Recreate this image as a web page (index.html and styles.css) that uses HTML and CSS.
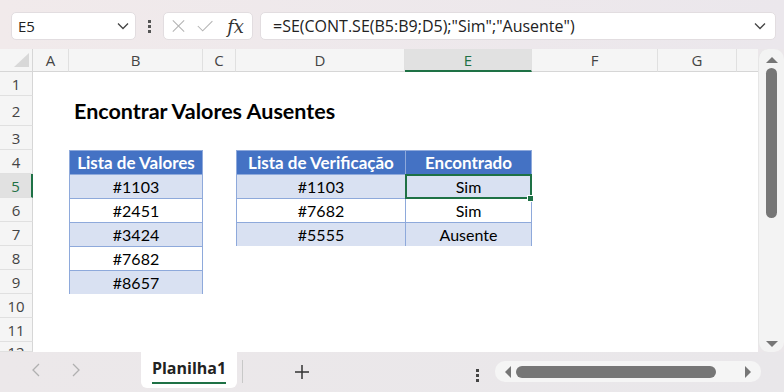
FILE: index.html
```html
<!DOCTYPE html>
<html lang="pt">
<head>
    <meta charset="UTF-8">
    <title>Encontrar Valores Ausentes</title>
    <link rel="stylesheet" href="styles.css">
</head>
<body>
    <div class="app">
        <!-- Formula bar -->
        <div class="topbar">
            <div class="namebox">
                <span>E5</span>
                <svg class="chev" width="12" height="8" viewBox="0 0 12 8"><path d="M1 1.5 L6 6.5 L11 1.5" fill="none" stroke="#444" stroke-width="1.3"/></svg>
            </div>
            <div class="vdots"><i></i><i></i><i></i></div>
            <div class="fxbox">
                <svg width="16" height="16" viewBox="0 0 16 16"><path d="M1 1 L15 15 M15 1 L1 15" stroke="#b4b4b4" stroke-width="1.3"/></svg>
                <svg width="20" height="16" viewBox="0 0 20 16"><path d="M1 8 L7 14 L19 2" fill="none" stroke="#b4b4b4" stroke-width="1.3"/></svg>
                <span class="fx">fx</span>
            </div>
            <div class="formula">
                <span>=SE(CONT.SE(B5:B9;D5);"Sim";"Ausente")</span>
                <svg class="chev" width="12" height="8" viewBox="0 0 12 8"><path d="M1 1.5 L6 6.5 L11 1.5" fill="none" stroke="#444" stroke-width="1.3"/></svg>
            </div>
        </div>

        <div class="main">
            <div class="sheet">
                <div class="corner"><span class="tri"></span></div>
                <div class="colh">A</div>
                <div class="colh">B</div>
                <div class="colh">C</div>
                <div class="colh">D</div>
                <div class="colh sel">E</div>
                <div class="colh">F</div>
                <div class="colh">G</div>
                <div class="colh last"></div>

                <div class="rowh r1">1</div>
                <div class="rowh r2">2</div>
                <div class="rowh r3">3</div>
                <div class="rowh r4">4</div>
                <div class="rowh r5 sel">5</div>
                <div class="rowh r6">6</div>
                <div class="rowh r7">7</div>
                <div class="rowh r8">8</div>
                <div class="rowh r9">9</div>
                <div class="rowh r10">10</div>
                <div class="rowh r11">11</div>
                <div class="rowh r12">12</div>

                <div class="title">Encontrar Valores Ausentes</div>

                <div class="xtable t1">
                    <div class="th">Lista de Valores</div>
                    <div class="td band">#1103</div>
                    <div class="td">#2451</div>
                    <div class="td band">#3424</div>
                    <div class="td">#7682</div>
                    <div class="td band">#8657</div>
                </div>

                <div class="xtable t2">
                    <div class="th">Lista de Verificação</div>
                    <div class="th">Encontrado</div>
                    <div class="td band">#1103</div>
                    <div class="td band active">Sim<span class="handle"></span></div>
                    <div class="td">#7682</div>
                    <div class="td">Sim</div>
                    <div class="td band">#5555</div>
                    <div class="td band">Ausente</div>
                </div>
            </div>

            <div class="vscroll">
                <span class="arrow up"></span>
                <span class="thumb"></span>
                <span class="arrow down"></span>
            </div>
        </div>

        <!-- Sheet tabs -->
        <div class="bottombar">
            <div class="nav">
                <svg width="10" height="16" viewBox="0 0 10 16"><path d="M8 2 L2 8 L8 14" fill="none" stroke="#b0b0b0" stroke-width="1.3"/></svg>
                <svg width="10" height="16" viewBox="0 0 10 16"><path d="M2 2 L8 8 L2 14" fill="none" stroke="#b0b0b0" stroke-width="1.3"/></svg>
            </div>
            <div class="tab"><span>Planilha1</span></div>
            <div class="sep"></div>
            <div class="plus">
                <svg width="16" height="16" viewBox="0 0 16 16"><path d="M8 1 V15 M1 8 H15" stroke="#333" stroke-width="1.5"/></svg>
            </div>
            <div class="hdots"><i></i><i></i><i></i></div>
            <div class="hscroll">
                <span class="arrow left"></span>
                <span class="thumb"></span>
                <span class="arrow right"></span>
            </div>
        </div>
    </div>
</body>
</html>
```

FILE: styles.css
```css
/* === Base === */
body {
    margin: 0;
    background: #ebe7ea;
    font-family: "Open Sans", "Noto Sans", sans-serif;
    color: #222;
}

.app {
    width: 784px;
    height: 392px;
    display: flex;
    flex-direction: column;
    overflow: hidden;
}

/* === Formula bar === */
.topbar {
    height: 49px;
    box-sizing: border-box;
    padding: 12px 8px 0 11px;
    display: flex;
    align-items: flex-start;
    background: linear-gradient(to right, #f1eaeb, #ebe7ec);
}

.namebox,
.fxbox,
.formula {
    height: 28px;
    box-sizing: border-box;
    background: #fff;
    border: 1px solid #e2dde0;
    border-radius: 5px;
    display: flex;
    align-items: center;
}

.namebox {
    width: 125px;
    padding: 0 6px 0 6px;
    justify-content: space-between;
    font-size: 15px;
}

.vdots {
    width: 27px;
    height: 28px;
    display: flex;
    flex-direction: column;
    align-items: center;
    justify-content: center;
    gap: 2px;
}

.vdots i {
    width: 3px;
    height: 3px;
    background: #555;
}

.fxbox {
    width: 90px;
    padding: 0 8px 0 8px;
    gap: 12px;
}

.fx {
    font-family: "DejaVu Serif", "Liberation Serif", serif;
    font-style: italic;
    font-size: 18px;
    color: #333;
    margin-left: 2px;
}

.formula {
    flex: 1;
    margin-left: 7px;
    padding: 0 9px 0 12px;
    justify-content: space-between;
    font-size: 16px;
}

/* === Grid === */
.main {
    display: flex;
    height: 303px;
}

.sheet {
    width: 758px;
    background: #fff;
    display: grid;
    grid-template-columns: 33px 36px 134px 33px 169px 127px 126px 79px 21px;
    grid-template-rows: 23px 24px 30px repeat(9, 24px) 10px;
    font-family: "Lato", "Open Sans", sans-serif;
    font-size: 16px;
    position: relative;
}

.corner {
    grid-row: 1;
    grid-column: 1;
    background: #f5f5f5;
    border-right: 1px solid #d6d6d6;
    border-bottom: 1px solid #d6d6d6;
    position: relative;
}

.tri {
    position: absolute;
    right: 3px;
    bottom: 4px;
    width: 0;
    height: 0;
    border-left: 15px solid transparent;
    border-bottom: 14px solid #d8d8d8;
}

.colh {
    grid-row: 1;
    background: #f5f5f5;
    border-right: 1px solid #e0e0e0;
    border-bottom: 1px solid #d6d6d6;
    display: flex;
    align-items: center;
    justify-content: center;
    font-family: "Open Sans", sans-serif;
    font-size: 15px;
    color: #444;
}

.colh.last {
    border-right: none;
}

.colh.sel {
    background: #e1e1e1;
    color: #1e7145;
    border-bottom: 2px solid #1e7145;
}

.rowh {
    grid-column: 1;
    background: #f5f5f5;
    border-right: 1px solid #d6d6d6;
    border-bottom: 1px solid #e0e0e0;
    display: flex;
    align-items: center;
    justify-content: center;
    font-family: "Open Sans", sans-serif;
    font-size: 15px;
    color: #444;
}

.rowh.sel {
    background: #e1e1e1;
    color: #1e7145;
    border-right: 2px solid #1e7145;
}

.r1 { grid-row: 2; }
.r2 { grid-row: 3; }
.r3 { grid-row: 4; }
.r4 { grid-row: 5; }
.r5 { grid-row: 6; }
.r6 { grid-row: 7; }
.r7 { grid-row: 8; }
.r8 { grid-row: 9; }
.r9 { grid-row: 10; }
.r10 { grid-row: 11; }
.r11 { grid-row: 12; }
.r12 { grid-row: 13; align-items: flex-start; overflow: hidden; }

.title {
    grid-row: 3;
    grid-column: 3 / 8;
    padding-left: 5px;
    display: flex;
    align-items: center;
    font-weight: bold;
    font-size: 21.5px;
    color: #000;
}

/* === Tables === */
.xtable {
    display: grid;
    grid-auto-rows: 24px;
    border-right: 1px solid #8ea9db;
    border-bottom: 1px solid #8ea9db;
    box-sizing: border-box;
}

.t1 {
    grid-column: 3;
    grid-row: 5 / 11;
    grid-template-columns: 1fr;
}

.t2 {
    grid-column: 5 / 7;
    grid-row: 5 / 9;
    grid-template-columns: 169px 1fr;
}

.th,
.td {
    border-left: 1px solid #8ea9db;
    border-top: 1px solid #8ea9db;
    display: flex;
    align-items: center;
    justify-content: center;
    color: #000;
}

.th {
    background: #4472c4;
    color: #fff;
    font-weight: bold;
    font-size: 17px;
}

.td.band {
    background: #d9e1f2;
}

.td.active {
    position: relative;
}

/* selection box over E5 */
.td.active::after {
    content: '';
    position: absolute;
    left: -1px;
    top: -1px;
    right: -1px;
    bottom: -1px;
    border: 2px solid #1e7145;
}

.handle {
    position: absolute;
    right: -3px;
    bottom: -4px;
    width: 5px;
    height: 5px;
    background: #1e7145;
    border: 1px solid #fff;
    z-index: 2;
}

/* === Vertical scrollbar === */
.vscroll {
    flex: 1;
    background: #f3f3f3;
    border-left: 1px solid #e6e6e6;
    border-radius: 10px 10px 10px 10px;
    display: flex;
    flex-direction: column;
    align-items: center;
    padding-top: 5px;
}

.vscroll .thumb {
    width: 11px;
    height: 150px;
    margin-top: 5px;
    background: #767676;
    border-radius: 6px;
}

.arrow {
    width: 0;
    height: 0;
}

.arrow.up {
    border-left: 6px solid transparent;
    border-right: 6px solid transparent;
    border-bottom: 6px solid #767676;
    margin-top: 3px;
}

.arrow.down {
    margin-top: auto;
    margin-bottom: 5px;
    border-left: 6px solid transparent;
    border-right: 6px solid transparent;
    border-top: 6px solid #767676;
}

/* === Bottom bar === */
.bottombar {
    flex: 1;
    display: flex;
    align-items: flex-start;
    background: linear-gradient(to right, #ece8ea, #e9e7ea);
}

.nav {
    width: 141px;
    height: 36px;
    display: flex;
    align-items: center;
    gap: 30px;
    padding-left: 31px;
    box-sizing: border-box;
}

.tab {
    width: 96px;
    height: 36px;
    background: #fff;
    border-radius: 0 0 6px 6px;
    display: flex;
    justify-content: center;
    align-items: flex-start;
}

.tab span {
    font-family: "Open Sans", sans-serif;
    font-weight: bold;
    font-size: 16px;
    color: #222;
    margin-top: 5px;
    padding-bottom: 2px;
    border-bottom: 2px solid #1e7145;
    height: 23px;
    line-height: 23px;
}

.sep {
    width: 1px;
    height: 23px;
    margin: 8px 0 0 5px;
    background: #c8c8c8;
}

.plus {
    margin: 12px 0 0 51px;
    display: flex;
}

.hdots {
    margin: 17px 0 0 166px;
    display: flex;
    flex-direction: column;
    gap: 2px;
}

.hdots i {
    width: 3px;
    height: 3px;
    background: #444;
}

.hscroll {
    margin: 9px 0 0 16px;
    width: 266px;
    height: 21px;
    background: #f5f5f5;
    border-radius: 10px;
    display: flex;
    align-items: center;
    padding: 0 10px 0 10px;
    box-sizing: border-box;
}

.hscroll .thumb {
    width: 200px;
    height: 12px;
    margin-left: 5px;
    background: #767676;
    border-radius: 6px;
}

.arrow.left {
    border-top: 6px solid transparent;
    border-bottom: 6px solid transparent;
    border-right: 6px solid #767676;
}

.arrow.right {
    margin-left: auto;
    border-top: 6px solid transparent;
    border-bottom: 6px solid transparent;
    border-left: 6px solid #767676;
}
```
